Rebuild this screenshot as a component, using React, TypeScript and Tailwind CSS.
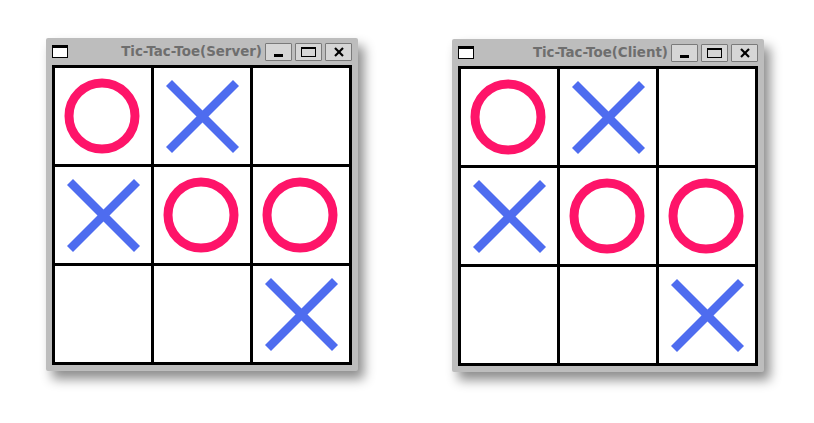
import React from "react";

type Mark = "O" | "X" | "";

const board: Mark[] = ["O", "X", "", "X", "O", "O", "", "", "X"];

function Cell({ m }: { m: Mark }) {
  return (
    <div className="bg-white w-[96px] h-[96px]">
      {m === "O" && (
        <svg width="96" height="96" viewBox="0 0 96 96">
          <circle cx="47" cy="48" r="33" fill="none" stroke="#fe1469" strokeWidth="9" />
        </svg>
      )}
      {m === "X" && (
        <svg width="96" height="96" viewBox="0 0 96 96">
          <line x1="15" y1="15" x2="82" y2="82" stroke="#4e6cef" strokeWidth="8.5" />
          <line x1="82" y1="15" x2="15" y2="82" stroke="#4e6cef" strokeWidth="8.5" />
        </svg>
      )}
    </div>
  );
}

function TitleButton({ kind }: { kind: "min" | "max" | "close" }) {
  return (
    <div className="w-[27px] h-[18px] bg-[#d6d6d6] border border-[#7a7a7a] rounded-[1px] flex items-center justify-center">
      {kind === "min" && <div className="w-[9px] h-[3px] bg-black mt-[7px]" />}
      {kind === "max" && (
        <div className="w-[15px] h-[10px] border border-black border-t-[2px]" />
      )}
      {kind === "close" && (
        <svg width="12" height="12" viewBox="0 0 12 12">
          <line x1="2" y1="2" x2="10" y2="10" stroke="black" strokeWidth="2.2" />
          <line x1="10" y1="2" x2="2" y2="10" stroke="black" strokeWidth="2.2" />
        </svg>
      )}
    </div>
  );
}

function Window({ title }: { title: string }) {
  return (
    <div className="w-[312px] bg-[#bdbdbd] rounded-[2px] shadow-[6px_8px_12px_rgba(0,0,0,0.45)] px-[6px] pb-[6px]">
      <div className="h-[27px] flex items-center">
        <div className="w-[16px] h-[13px] border border-black border-t-[3px] bg-white" />
        <div
          className="flex-1 text-right pr-[3px] text-[13.4px] font-bold text-[#6e6e6e] leading-none"
          style={{ fontFamily: '"DejaVu Sans", sans-serif' }}
        >
          {title}
        </div>
        <div className="flex gap-[3px]">
          <TitleButton kind="min" />
          <TitleButton kind="max" />
          <TitleButton kind="close" />
        </div>
      </div>
      <div className="grid grid-cols-3 gap-[3px] bg-black p-[3px] w-[300px]">
        {board.map((m, i) => (
          <Cell key={i} m={m} />
        ))}
      </div>
    </div>
  );
}

export default function App() {
  return (
    <div className="w-[814px] h-[423px] bg-white flex items-start pl-[46px] pt-[38px] gap-[94px]">
      <Window title="Tic-Tac-Toe(Server)" />
      <div className="mt-[1px]">
        <Window title="Tic-Tac-Toe(Client)" />
      </div>
    </div>
  );
}
